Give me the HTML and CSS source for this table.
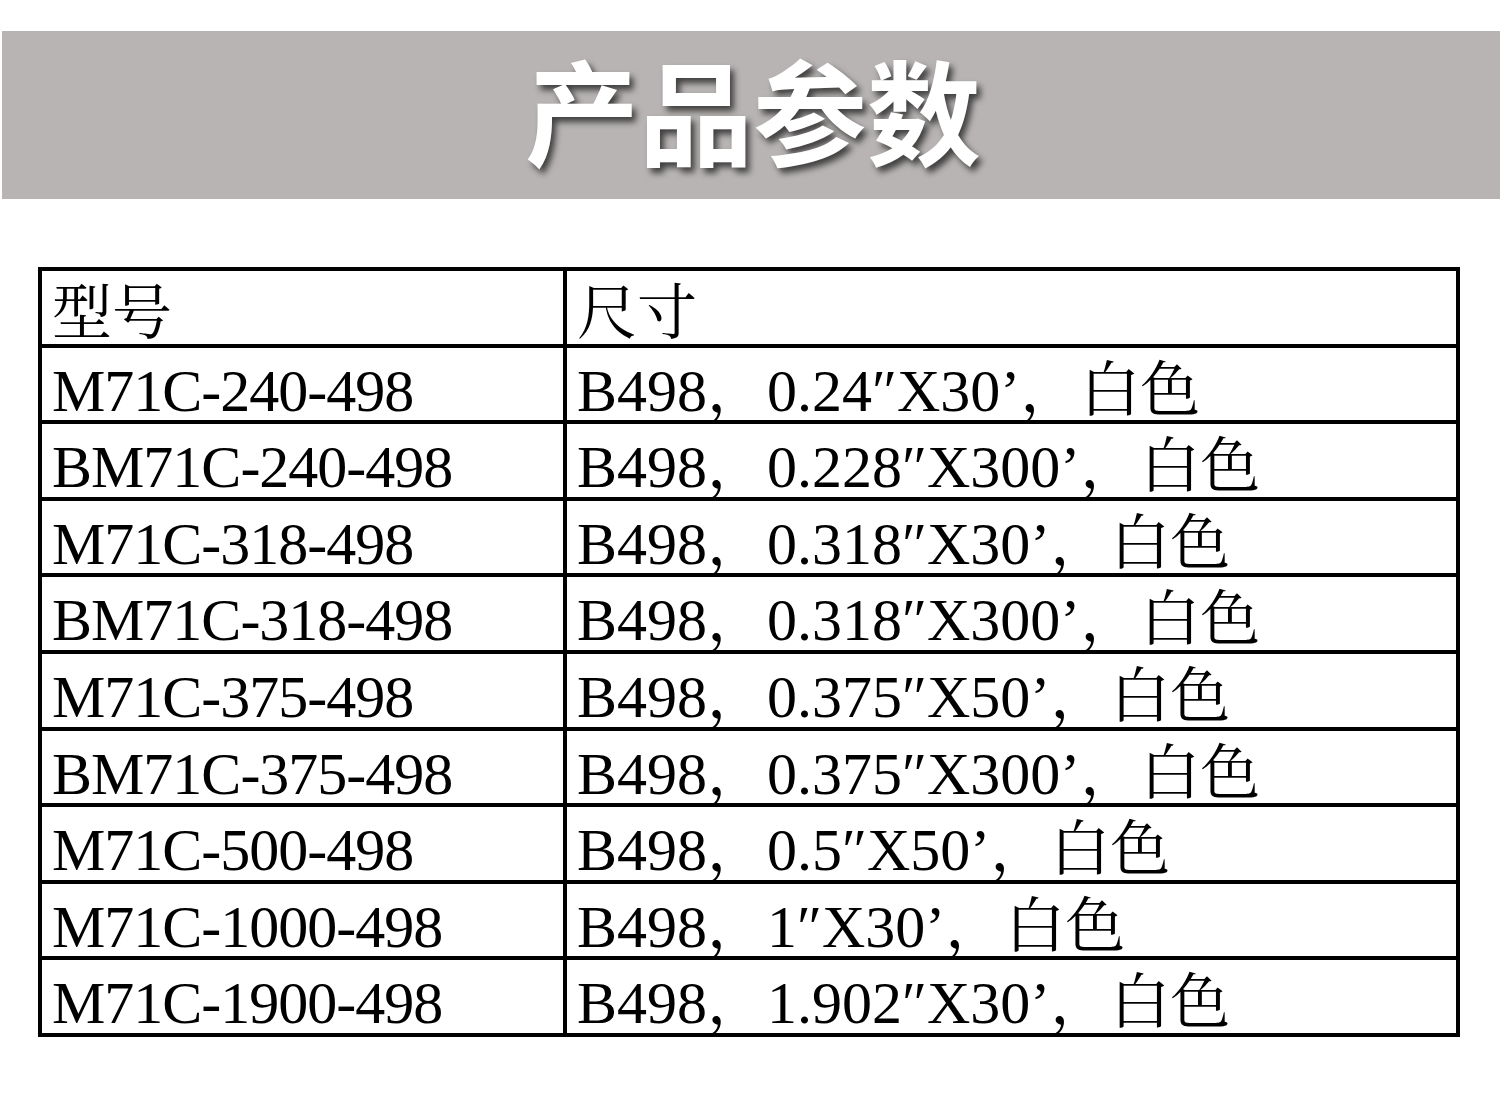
FILE: index.html
```html
<!DOCTYPE html>
<html lang="zh-CN">
<head>
<meta charset="utf-8">
<title>产品参数</title>
<link rel="stylesheet" href="styles.css">
</head>
<body>
<div class="page">
  <header class="banner">
    <h1 class="banner-title">产品参数</h1>
  </header>
  <div class="spec" role="table">
    <div class="cell head model" role="columnheader">型号</div>
    <div class="cell head" role="columnheader">尺寸</div>

    <div class="cell model" role="cell">M71C-240-498</div>
    <div class="cell" role="cell">B498，0.24″X30’，白色</div>

    <div class="cell model" role="cell">BM71C-240-498</div>
    <div class="cell" role="cell">B498，0.228″X300’，白色</div>

    <div class="cell model" role="cell">M71C-318-498</div>
    <div class="cell" role="cell">B498，0.318″X30’，白色</div>

    <div class="cell model" role="cell">BM71C-318-498</div>
    <div class="cell" role="cell">B498，0.318″X300’，白色</div>

    <div class="cell model" role="cell">M71C-375-498</div>
    <div class="cell" role="cell">B498，0.375″X50’，白色</div>

    <div class="cell model" role="cell">BM71C-375-498</div>
    <div class="cell" role="cell">B498，0.375″X300’，白色</div>

    <div class="cell model" role="cell">M71C-500-498</div>
    <div class="cell" role="cell">B498，0.5″X50’，白色</div>

    <div class="cell model" role="cell">M71C-1000-498</div>
    <div class="cell" role="cell">B498，1″X30’，白色</div>

    <div class="cell model" role="cell">M71C-1900-498</div>
    <div class="cell" role="cell">B498，1.902″X30’，白色</div>
  </div>
</div>
</body>
</html>
```

FILE: styles.css
```css
html, body {
  margin: 0;
  padding: 0;
  background: #ffffff;
}

.page {
  padding-top: 31px;
}

.banner {
  margin-left: 2px;
  height: 168px;
  background: #b7b4b3;
  display: flex;
  align-items: center;
  justify-content: center;
}

.banner-title {
  margin: 0;
  font-family: "Noto Sans CJK SC", "Noto Sans CJK TC", sans-serif;
  font-weight: 700;
  font-size: 114px;
  line-height: 1;
  color: #ffffff;
  text-shadow: 4px 5px 6px rgba(0, 0, 0, 0.65);
  padding: 0 0 14px 4px;
}

.spec {
  margin: 68px 0 0 38px;
  width: 1414px;
  padding: 4px;
  background: #000000;
  display: grid;
  grid-template-columns: 521px 889px;
  grid-template-rows: repeat(10, 72.6px);
  gap: 4px;
}

.cell {
  background: #ffffff;
  padding: 15px 0 0 10px;
  font-family: "Liberation Serif", "DejaVu Serif", "Noto Serif CJK SC", "Noto Sans CJK SC", serif;
  font-size: 60px;
  line-height: 56px;
  color: #000000;
  white-space: nowrap;
  min-height: 0;
}

.model {
  letter-spacing: -1px;
}

.head {
  letter-spacing: 0;
}
```
